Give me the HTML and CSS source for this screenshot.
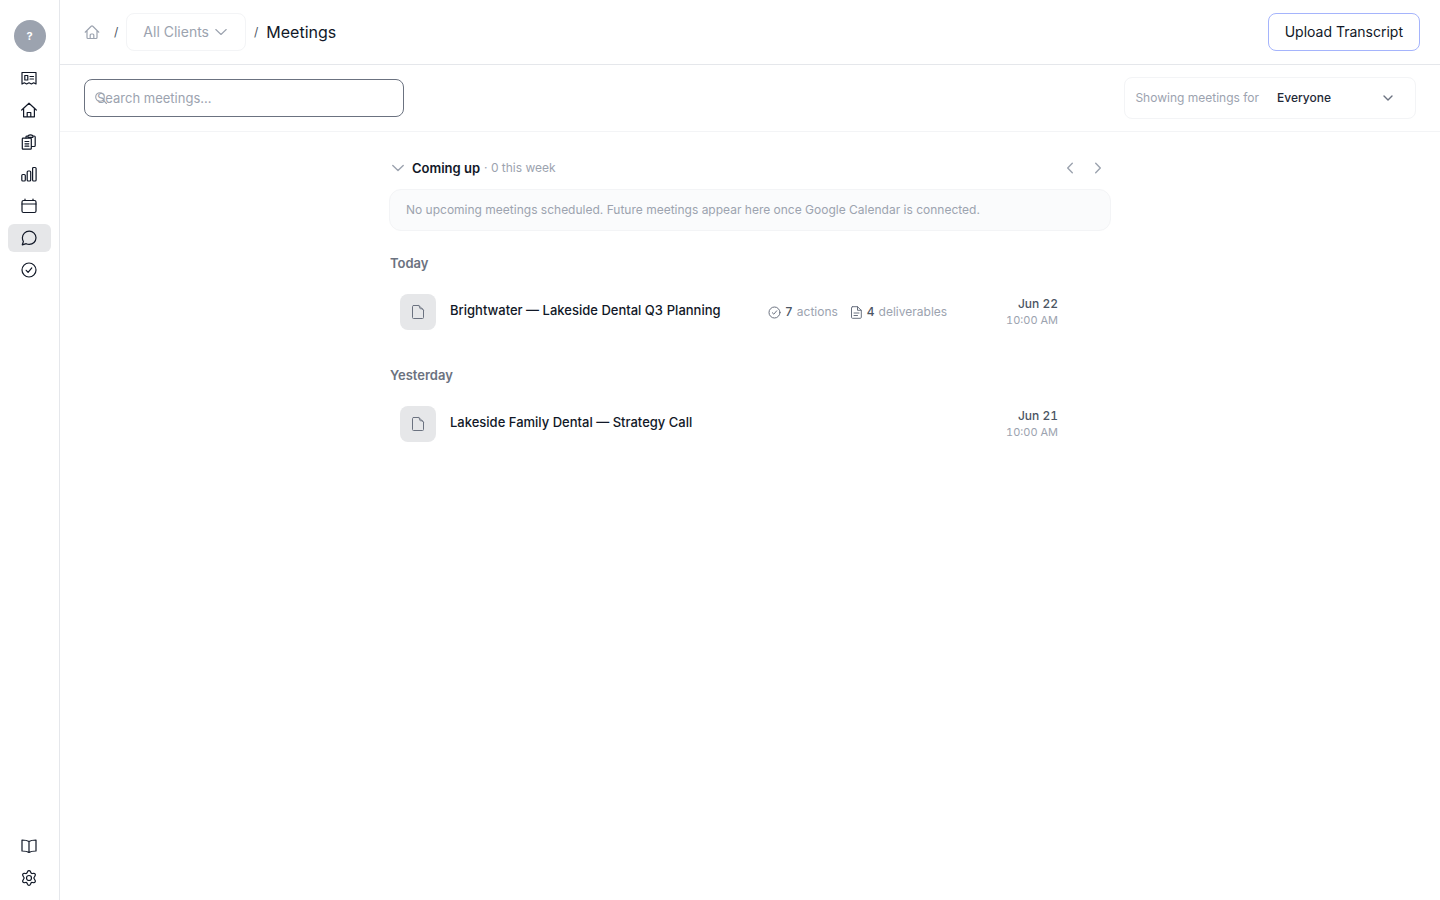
FILE: index.html
```html
<!DOCTYPE html>
<html lang="en">
<head>
<meta charset="utf-8">
<meta name="viewport" content="width=device-width, initial-scale=1">
<title>Meetings</title>
<link rel="stylesheet" href="styles.css">
</head>
<body>
<div class="app">
  <nav class="sidebar" aria-label="Main">
    <button class="avatar" type="button" aria-label="Account">?</button>
    <a class="nav-link" href="#" aria-label="Briefing"><svg class="icon" viewBox="0 0 16 16"><path d="M1 14V2.500h14V14l-2.300-1.200-2.300 1.200L8 12.800 5.600 14l-2.300-1.200z"/><path d="M3.800 5.500h3v4.500h-3zM9 6.500h3.500M9 9h3.500"/></svg></a>
    <a class="nav-link" href="#" aria-label="Home"><svg class="icon" viewBox="0 0 16 16"><path d="M.7 8 8 1.200 15.300 8M2.600 6.500v8.300h10.800V6.500M6.200 14.800v-4.300h3.600v4.300"/></svg></a>
    <a class="nav-link" href="#" aria-label="Projects"><svg class="icon" viewBox="0 0 16 16"><rect x="1.300" y="4.200" width="9" height="11" rx=".8"/><path d="M4 7.500h3.800M4 9.800h3.800M4 12.200h3.800M5 4V3a1 1 0 0 1 1-1h.8M11.800 2h1.400a1 1 0 0 1 1 1v8.500a1 1 0 0 1-1 1h-2.700M7 3.300c-.6-1.400.8-2.500 2.500-2.500s3 1.100 2.400 2.500z"/></svg></a>
    <a class="nav-link" href="#" aria-label="Reports"><svg class="icon" viewBox="0 0 16 16"><rect x=".8" y="8.500" width="3.500" height="6.500" rx="1"/><rect x="6.200" y="5" width="3.500" height="10" rx="1"/><rect x="11.600" y="1.500" width="3.500" height="13.500" rx="1"/></svg></a>
    <a class="nav-link" href="#" aria-label="Calendar"><svg class="icon" viewBox="0 0 16 16"><rect x="1" y="2.500" width="14" height="12" rx="1.500"/><path d="M1 6h14M4 1v1.500M12 1v1.500"/></svg></a>
    <a class="nav-link nav-link-active" href="#" aria-label="Meetings" aria-current="page"><svg class="icon" viewBox="0 0 16 16"><path d="M8.200 1.200c3.800 0 6.800 2.900 6.800 6.600s-3 6.600-6.800 6.600a7 7 0 0 1-3-.7L1.300 14.800l1.100-3.300A6.200 6.200 0 0 1 1.400 7.800c0-3.700 3-6.600 6.800-6.600z"/></svg></a>
    <a class="nav-link" href="#" aria-label="Tasks"><svg class="icon" viewBox="0 0 16 16"><circle cx="8" cy="8" r="7"/><path d="m5.200 8.300 1.900 2 3.700-4.400"/></svg></a>
    <div class="sidebar-end">
      <a class="nav-link" href="#" aria-label="Guide"><svg class="icon" viewBox="0 0 16 16"><path d="M8 3.500C6.500 2.500 4.500 2 1 2v11c3.500 0 5.500.400 7 1.500 1.500-1.100 3.500-1.500 7-1.500V2c-3.500 0-5.500.500-7 1.500zM8 3.500v11"/></svg></a>
      <a class="nav-link" href="#" aria-label="Settings"><svg class="icon" viewBox="0 0 16 16"><circle cx="8" cy="8" r="2.500"/><path d="M6.500 1.700a1.600 1.600 0 0 1 3 0l.3.900a1.500 1.500 0 0 0 1.700.900l1-.2a1.600 1.600 0 0 1 1.500 2.600l-.6.900a1.700 1.700 0 0 0 0 2.400l.6.900a1.600 1.600 0 0 1-1.500 2.600l-1-.2a1.500 1.500 0 0 0-1.700.9l-.3.900a1.600 1.600 0 0 1-3 0l-.3-.9a1.500 1.500 0 0 0-1.700-.9l-1 .2A1.600 1.600 0 0 1 2 10.100l.6-.9a1.700 1.700 0 0 0 0-2.400L2 5.900a1.600 1.600 0 0 1 1.500-2.600l1 .2a1.500 1.500 0 0 0 1.700-.9z"/></svg></a>
    </div>
  </nav>

  <div class="page">
    <header class="topbar">
      <nav class="crumbs" aria-label="Breadcrumb">
        <a class="crumb-home" href="#" aria-label="Home"><svg class="icon" viewBox="0 0 16 16"><path d="m1.200 8.200 6-5.900a1.100 1.100 0 0 1 1.600 0l6 5.900M3 7v6.500a1 1 0 0 0 1 1h8a1 1 0 0 0 1-1V7M6.200 14.200V11a1 1 0 0 1 1-1h1.600a1 1 0 0 1 1 1v3.200"/></svg></a>
        <span class="slash">/</span>
        <button class="client-button" type="button">All Clients<svg class="icon icon-small" viewBox="0 0 12 12"><path d="m.8 3.500 5.200 5 5.200-5"/></svg></button>
        <span class="slash">/</span>
        <h1 class="title">Meetings</h1>
      </nav>
      <button class="upload" type="button">Upload Transcript</button>
    </header>

    <div class="toolbar">
      <div class="search">
        <svg class="icon icon-small search-icon" viewBox="0 0 12 12"><circle cx="5" cy="5" r="4.300"/><path d="m8.200 8.200 3.300 3.300"/></svg>
        <input class="search-input" type="text" placeholder="Search meetings..." aria-label="Search meetings">
      </div>
      <div class="filter">
        <label class="filter-label" for="owner">Showing meetings for</label>
        <div class="select-wrap">
          <select class="select" id="owner"><option>Everyone</option></select>
          <svg class="icon icon-small icon-bold select-arrow" viewBox="0 0 12 12"><path d="m2 4 4 4 4-4"/></svg>
        </div>
      </div>
    </div>

    <main class="content">
      <section class="upcoming">
        <div class="upcoming-head">
          <button class="toggle" type="button" aria-expanded="true">
            <svg class="icon icon-small icon-bold" viewBox="0 0 12 12"><path d="m.8 3.500 5.200 5 5.200-5"/></svg>
            <span class="toggle-title">Coming up</span>
            <span class="toggle-count">· 0 this week</span>
          </button>
          <div class="pager">
            <button class="pager-button" type="button" aria-label="Previous week"><svg class="icon icon-small icon-bold" viewBox="0 0 12 12"><path d="M8.300 1.300 3.700 6l4.600 4.700"/></svg></button>
            <button class="pager-button" type="button" aria-label="Next week"><svg class="icon icon-small icon-bold" viewBox="0 0 12 12"><path d="M3.700 1.300 8.300 6l-4.600 4.700"/></svg></button>
          </div>
        </div>
        <p class="empty">No upcoming meetings scheduled. Future meetings appear here once Google Calendar is connected.</p>
      </section>

      <section class="day">
        <h2 class="day-title">Today</h2>
        <a class="meeting" href="#">
          <span class="file"><svg class="icon" viewBox="0 0 16 16"><path d="M3.500 1.500h5.300l4.700 4.500v7.500a1 1 0 0 1-1 1h-9a1 1 0 0 1-1-1v-11a1 1 0 0 1 1-1zM8.800 1.500c1.200 1.200.2 3 1.700 3.200 1.500.1 2.400 0 3 1.300"/></svg></span>
          <span class="meeting-title">Brightwater — Lakeside Dental Q3 Planning</span>
          <span class="stats">
            <span class="stat"><svg class="icon" viewBox="0 0 13 13"><circle cx="6.500" cy="6.500" r="5.500"/><path d="m4.300 6.700 1.500 1.500 2.900-3.400"/></svg><b class="stat-number">7</b>actions</span>
            <span class="stat"><svg class="icon" viewBox="0 0 13 13"><path d="M2.500.7h5l3.800 3.600v7a1 1 0 0 1-1 1H2.500a1 1 0 0 1-1-1V1.700a1 1 0 0 1 1-1zM7.500.7v3.600h3.800M4 7h5M4 9.500h3.500"/></svg><b class="stat-number">4</b>deliverables</span>
          </span>
          <span class="when"><span class="date">Jun 22</span><span class="time">10:00 AM</span></span>
        </a>
      </section>

      <section class="day">
        <h2 class="day-title">Yesterday</h2>
        <a class="meeting" href="#">
          <span class="file"><svg class="icon" viewBox="0 0 16 16"><path d="M3.500 1.500h5.300l4.700 4.500v7.500a1 1 0 0 1-1 1h-9a1 1 0 0 1-1-1v-11a1 1 0 0 1 1-1zM8.800 1.500c1.200 1.200.2 3 1.700 3.200 1.500.1 2.400 0 3 1.300"/></svg></span>
          <span class="meeting-title">Lakeside Family Dental — Strategy Call</span>
          <span class="stats"></span>
          <span class="when"><span class="date">Jun 21</span><span class="time">10:00 AM</span></span>
        </a>
      </section>
    </main>
  </div>
</div>
</body>
</html>
```

FILE: styles.css
```css
* { box-sizing: border-box; }

body {
  margin: 0;
  background: #fff;
  color: #111827;
  font: 14px/20px Inter, "Liberation Sans", sans-serif;
}

button, input, select { font: inherit; color: inherit; }
button { background: none; border: 0; padding: 0; cursor: pointer; }
a { color: inherit; text-decoration: none; }
h1, h2, p { margin: 0; }

.icon {
  display: block;
  flex: none;
  width: 16px;
  height: 16px;
  fill: none;
  stroke: currentColor;
  stroke-width: 1.2;
  stroke-linecap: round;
  stroke-linejoin: round;
}
.icon-small { width: 12px; height: 12px; stroke-width: 1.1; }
.icon-bold { stroke-width: 1.4; }

.app { display: flex; min-height: 100vh; }

.sidebar {
  display: flex;
  flex-direction: column;
  flex: none;
  gap: 4px;
  width: 60px;
  padding: 20px 8px 8px;
  border-right: 1px solid #e5e7eb;
}
.avatar {
  align-self: center;
  width: 32px;
  height: 32px;
  margin-bottom: 8px;
  border-radius: 50%;
  background: #9ca3af;
  color: #fff;
  font-size: 11px;
  font-weight: 700;
}
.nav-link {
  display: flex;
  align-items: center;
  justify-content: center;
  height: 28px;
  padding-right: 2px;
  border-radius: 6px;
}
.nav-link-active { background: #e6e7e9; }
.sidebar-end {
  display: flex;
  flex-direction: column;
  gap: 4px;
  margin-top: auto;
}

.page { flex: 1; min-width: 0; }

.topbar {
  display: flex;
  align-items: center;
  justify-content: space-between;
  padding: 13px 20px 13px 24px;
  border-bottom: 1px solid #e5e7eb;
}
.crumbs { display: flex; align-items: center; gap: 8px; }
.crumb-home { margin-right: 6px; color: #9ca3af; }
.slash { color: #4b5563; font-size: 12px; }
.client-button {
  display: flex;
  align-items: center;
  gap: 6px;
  height: 38px;
  padding: 0 18px 0 16px;
  border: 1px solid #f3f4f6;
  border-radius: 8px;
  color: #9ca3af;
}
.title { font-size: 16px; font-weight: 400; }
.upload {
  height: 38px;
  padding: 0 16px;
  border: 1px solid #a5b4fc;
  border-radius: 8px;
}

.toolbar {
  display: flex;
  align-items: center;
  justify-content: space-between;
  padding: 12px 24px;
  border-bottom: 1px solid #f3f4f6;
}
.search { position: relative; width: 320px; }
.search-icon { position: absolute; left: 11px; top: 13px; color: #9ca3af; }
.search-input {
  display: block;
  width: 100%;
  height: 38px;
  padding: 0 12px;
  border: 1px solid #6b7280;
  border-radius: 8px;
  background: none;
  font-size: 13px;
}
.search-input::placeholder { color: #9ca3af; }
.filter {
  display: flex;
  align-items: center;
  gap: 8px;
  height: 42px;
  padding: 0 12px 0 10px;
  border: 1px solid #f3f4f6;
  border-radius: 8px;
  font-size: 12px;
}
.filter-label { color: #9ca3af; }
.select-wrap { position: relative; width: 136px; }
.select {
  appearance: none;
  width: 100%;
  height: 28px;
  padding: 0 28px 0 10px;
  border: 0;
  background: none;
  color: #1f2937;
  font-weight: 500;
}
.select-arrow {
  position: absolute;
  right: 9px;
  top: 8px;
  color: #6b7280;
  pointer-events: none;
}

.content { max-width: 722px; margin: 0 auto; padding: 22px 0; }

.upcoming { margin-bottom: 4px; }
.upcoming-head {
  display: flex;
  align-items: center;
  justify-content: space-between;
  margin-bottom: 7px;
}
.toggle {
  display: flex;
  align-items: center;
  gap: 4px;
  height: 28px;
  padding-left: 3px;
  color: #9ca3af;
  font-size: 12px;
}
.toggle-title { padding-left: 4px; color: #111827; font-size: 13px; font-weight: 600; }
.pager { display: flex; gap: 2px; }
.pager-button {
  display: flex;
  align-items: center;
  justify-content: center;
  width: 26px;
  height: 28px;
  color: #9ca3af;
}
.empty {
  padding: 10px 16px;
  border: 1px solid #f3f4f6;
  border-radius: 12px;
  background: #fafbfc;
  color: #9ca3af;
  font-size: 12px;
}

.day { padding-top: 18px; }
.day-title {
  margin-bottom: 4px;
  padding: 0 1px;
  color: #6b7280;
  font-size: 13px;
  font-weight: 600;
}
.meeting {
  display: grid;
  grid-template-columns: 36px minmax(0, 1fr) 190px 86px;
  column-gap: 14px;
  align-items: center;
  height: 70px;
  padding: 0 53px 0 11px;
  font-variant-numeric: tabular-nums;
}
.file {
  display: flex;
  align-items: center;
  justify-content: center;
  width: 36px;
  height: 36px;
  border-radius: 8px;
  background: #e6e7e9;
  color: #6b7280;
}
.file .icon { stroke-width: 1; }
.meeting-title { padding-bottom: 4px; font-size: 13px; font-weight: 500; }
.stats { display: flex; gap: 12px; color: #9ca3af; font-size: 12px; }
.stat { display: flex; align-items: center; gap: 4px; }
.stat .icon { width: 13px; height: 13px; color: #6b7280; stroke-width: 1; }
.stat-number { color: #4b5563; font-weight: 500; }
.when { display: grid; text-align: right; line-height: 16px; }
.date { color: #4b5563; font-size: 12px; font-weight: 500; }
.time { color: #9ca3af; font-size: 11px; }
```
